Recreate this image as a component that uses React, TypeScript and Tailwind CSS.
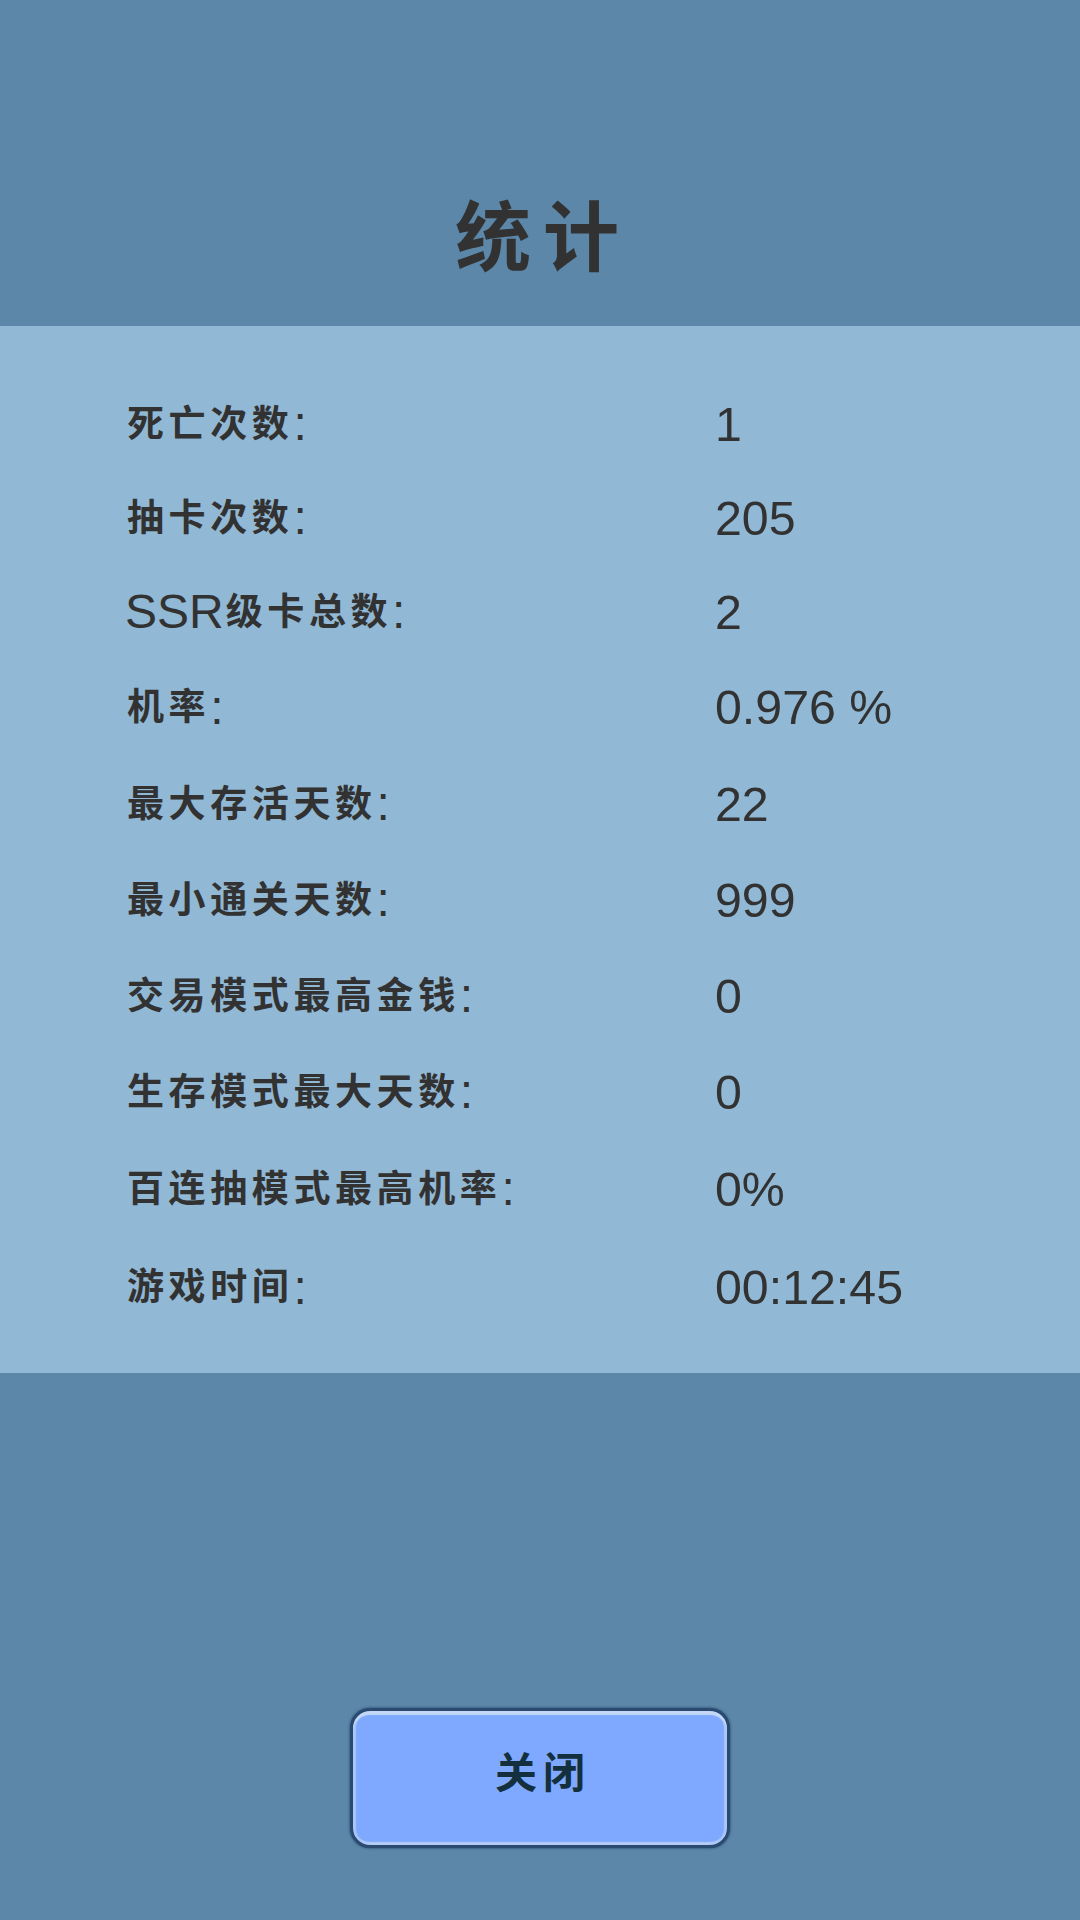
import React from "react";

const sans = "font-['Liberation_Sans','Noto_Sans_CJK_SC',sans-serif]";

const rows = [
  { label: "死亡次数", value: "1", h: "h-[94px]" },
  { label: "抽卡次数", value: "205", h: "h-[94px]" },
  { label: "SSR级卡总数", value: "2", h: "h-[94px]" },
  { label: "机率", value: "0.976 %", h: "h-[97px]" },
  { label: "最大存活天数", value: "22", h: "h-[96px]" },
  { label: "最小通关天数", value: "999", h: "h-[96px]" },
  { label: "交易模式最高金钱", value: "0", h: "h-[96px]" },
  { label: "生存模式最大天数", value: "0", h: "h-[96px]" },
  { label: "百连抽模式最高机率", value: "0%", h: "h-[98px]" },
  { label: "游戏时间", value: "00:12:45", h: "h-[99px]" },
];

function Label({ text }: { text: string }) {
  // latin part of the label stays regular, CJK part is heavy and spaced
  const m = text.match(/^([A-Za-z]*)(.*)$/);
  return (
    <div className="flex items-center text-[48px] leading-none">
      {m?.[1] && <span>{m[1]}</span>}
      <span className="pl-[2px] text-[37px] font-bold tracking-[4.6px]">{m?.[2]}</span>
      <span>:</span>
    </div>
  );
}

export default function App() {
  return (
    <div className={`flex h-[1920px] w-[1080px] flex-col items-center bg-[#5c87a8] text-[#323232] ${sans}`}>
      <div className="flex h-[326px] w-full items-start justify-center pt-[193px] pl-[6px]">
        <h1 className="text-[76px] leading-[92px] font-bold tracking-[12px]">统计</h1>
      </div>
      <div className="flex h-[1047px] w-full flex-col bg-[#91b8d4] pt-[51px] pl-[125px]">
        {rows.map((r) => (
          <div key={r.label} className={`flex items-center ${r.h}`}>
            <div className="w-[590px]">
              <Label text={r.label} />
            </div>
            <div className="text-[48.3px] leading-none">{r.value}</div>
          </div>
        ))}
      </div>
      <button className="mt-[335px] flex h-[140px] w-[380px] items-center justify-center rounded-[20px] border-[3px] border-[#2a4a70] bg-[#7fa9ff] shadow-[0_0_3px_#23436a,inset_0_4px_1px_#c3d8f5,inset_3px_0_1px_#a9c6f5,inset_-3px_0_1px_#a9c6f5,inset_0_-3px_1px_#b4cdf5]">
        <span className="mb-[8px] pl-[6px] text-[42px] leading-none font-bold tracking-[6px] text-[#14303f]">关闭</span>
      </button>
    </div>
  );
}
